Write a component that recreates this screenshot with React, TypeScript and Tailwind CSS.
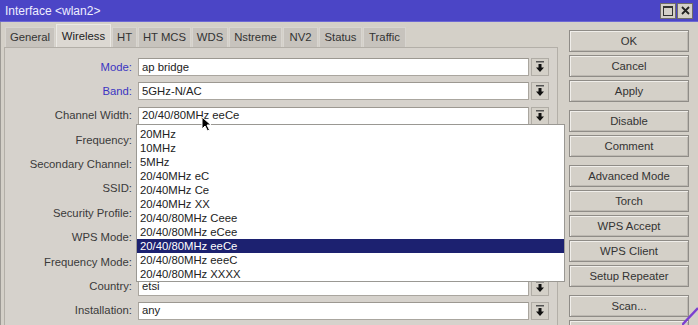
import React from 'react';

type Row = { label: string; value?: string; blue?: boolean };

const rows: Row[] = [
  { label: 'Mode', value: 'ap bridge', blue: true },
  { label: 'Band', value: '5GHz-N/AC', blue: true },
  { label: 'Channel Width', value: '20/40/80MHz eeCe' },
  { label: 'Frequency' },
  { label: 'Secondary Channel' },
  { label: 'SSID' },
  { label: 'Security Profile' },
  { label: 'WPS Mode' },
  { label: 'Frequency Mode' },
  { label: 'Country', value: 'etsi' },
  { label: 'Installation', value: 'any' },
];

const tabs = [
  { name: 'General', w: 'w-[50px]' },
  { name: 'Wireless', w: 'w-[55px]', active: true },
  { name: 'HT', w: 'w-[25px]' },
  { name: 'HT MCS', w: 'w-[53px]' },
  { name: 'WDS', w: 'w-[36px]' },
  { name: 'Nstreme', w: 'w-[53px]' },
  { name: 'NV2', w: 'w-[35px]' },
  { name: 'Status', w: 'w-[43px]' },
  { name: 'Traffic', w: 'w-[43px]' },
];

const widths = [
  '20MHz',
  '10MHz',
  '5MHz',
  '20/40MHz eC',
  '20/40MHz Ce',
  '20/40MHz XX',
  '20/40/80MHz Ceee',
  '20/40/80MHz eCee',
  '20/40/80MHz eeCe',
  '20/40/80MHz eeeC',
  '20/40/80MHz XXXX',
];

// last one only peeks in at the bottom edge, no label visible
const buttonGroups = [
  ['OK', 'Cancel', 'Apply'],
  ['Disable', 'Comment'],
  ['Advanced Mode', 'Torch', 'WPS Accept', 'WPS Client', 'Setup Repeater'],
  ['Scan...', ''],
];

const DropArrow = () => (
  <svg width="10" height="12" viewBox="0 0 10 12">
    <rect x="1" y="0" width="8" height="1.5" fill="#555" />
    <polygon points="3.5,3 6.5,3 6.5,6.5 9,6.5 5,11 1,6.5 3.5,6.5" fill="#111" />
  </svg>
);

const App: React.FC = () => {
  return (
    <div className="relative w-[698px] h-[325px] overflow-hidden bg-[#d4d0c8] flex flex-col font-['Liberation_Sans',Arial,sans-serif] text-[11.3px] text-[#333]">
      {/* title bar */}
      <div className="h-[22px] shrink-0 bg-[#4b45c6] border-b border-[#6d68d4] flex items-center justify-between pl-[5px] pr-[5px]">
        <span className="text-[#eeeeff] text-[12px]">Interface &lt;wlan2&gt;</span>
        <div className="flex gap-[1px]">
          <div className="w-[16px] h-[16px] bg-[#d4d0c8] border border-[#6f6c68] flex items-center justify-center">
            <div className="w-[10px] h-[10px] border border-[#333] border-t-2" />
          </div>
          <div className="w-[16px] h-[16px] bg-[#d4d0c8] border border-[#6f6c68] flex items-center justify-center">
            <svg width="9" height="9" viewBox="0 0 9 9">
              <path d="M1 1 L8 8 M8 1 L1 8" stroke="#222" strokeWidth="1.8" />
            </svg>
          </div>
        </div>
      </div>

      <div className="flex-1 flex pl-[3px] border-l border-[#9d9a95]">
        {/* left: tabs + panel */}
        <div className="w-[554px] flex flex-col">
          <div className="h-[25px] flex items-end gap-[1px] pl-[1px]">
            {tabs.map(t => (
              <div
                key={t.name}
                className={`${t.w} flex items-center justify-center border border-b-0 ${
                  t.active
                    ? 'h-[23px] bg-[#dcd8d2] border-[#ebe9e5] text-[#222]'
                    : 'h-[20px] bg-[#c7c3bd] border-[#d8d5d0] text-[#333]'
                }`}
              >
                {t.name}
              </div>
            ))}
          </div>
          <div className="flex-1 bg-[#d6d2cc] border-t border-l border-r border-[#b3afa8] pt-[10px] flex flex-col gap-[6.4px]">
            {rows.map(r => (
              <div key={r.label} className="flex items-center h-[18px]">
                <div className={`w-[127px] text-right ${r.blue ? 'text-[#3b35c2]' : 'text-[#3a3a3a]'}`}>{r.label}:</div>
                <div className="ml-[6px] w-[391px] h-[18px] bg-white border border-[#aaa69f] border-t-[#9c9891] flex items-center pl-[3px] text-[#222]">
                  {r.value}
                </div>
                <div className="ml-[2px] w-[18px] h-[18px] bg-[#d4d0c8] border border-[#b0aca5] flex items-center justify-center">
                  <DropArrow />
                </div>
              </div>
            ))}
          </div>
        </div>

        {/* right: buttons */}
        <div className="pl-[11px] pt-[8px] flex flex-col gap-[8px]">
          {buttonGroups.map((g, i) => (
            <div key={i} className="flex flex-col gap-[3px]">
              {g.map((b, j) => (
                <div
                  key={j}
                  className="w-[120px] h-[22px] shrink-0 bg-[#d4d0c8] border border-[#8f8c87] shadow-[inset_1px_1px_0_#f0eeea,inset_-1px_-1px_0_#bdb9b2] flex items-center justify-center text-[#333]"
                >
                  {b}
                </div>
              ))}
            </div>
          ))}
        </div>
      </div>

      {/* open dropdown list */}
      <div className="absolute left-[136px] top-[124px] w-[429px] h-[158px] bg-white border border-[#9a9893] pt-[2px] text-[#222]">
        {widths.map(w => (
          <div
            key={w}
            className={`h-[14px] leading-[14px] pl-[3px] ${w === '20/40/80MHz eeCe' ? 'bg-[#1c2170] text-white' : ''}`}
          >
            {w}
          </div>
        ))}
      </div>

      {/* mouse pointer */}
      <svg className="absolute left-[201px] top-[116px]" width="11" height="16" viewBox="0 0 11 16">
        <path d="M1 1 L1 13 L4 10 L6.5 15 L8.5 14 L6 9 L10 9 Z" fill="#000" stroke="#fff" strokeWidth="1" />
      </svg>

      {/* resize grip corner */}
      <svg className="absolute right-0 bottom-0" width="16" height="18" viewBox="0 0 16 18">
        <path d="M0 18 L16 1" stroke="#7b3fd0" strokeWidth="2.5" />
      </svg>
    </div>
  );
};

export default App;
